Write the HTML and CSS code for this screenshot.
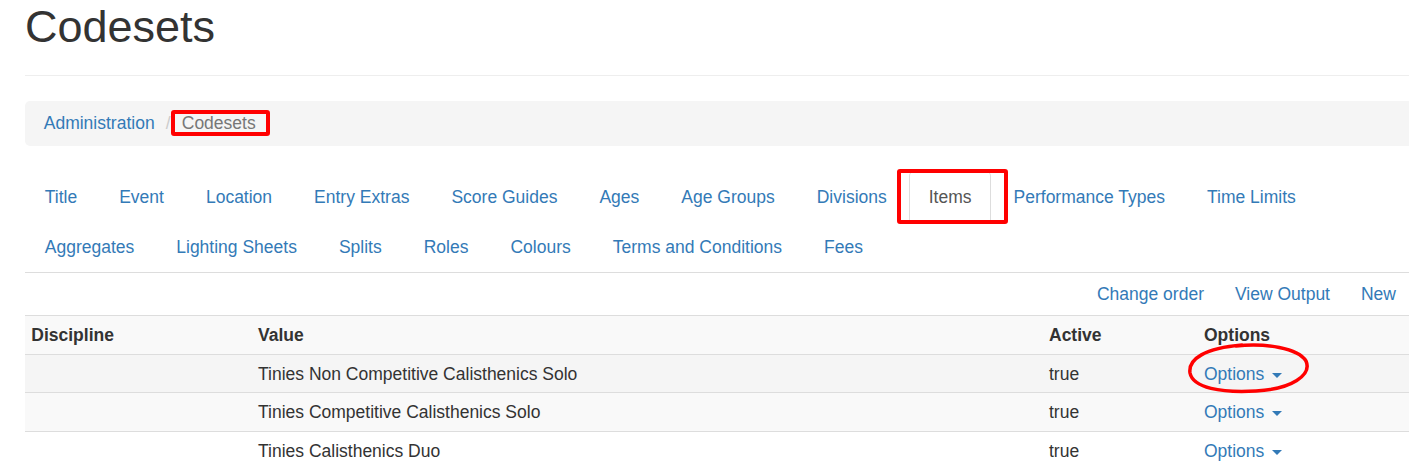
FILE: index.html
```html
<!DOCTYPE html>
<html>
<head>
<meta charset="UTF-8">
<title>Codesets</title>
<link rel="stylesheet" href="styles.css">
</head>
<body>
<div class="page">
  <div class="page-header">
    <h1>Codesets</h1>
  </div>

  <ol class="breadcrumb">
    <li><a href="#">Administration</a></li>
    <li class="active"><span class="marked">Codesets</span></li>
  </ol>

  <ul class="nav-tabs">
    <li><a href="#">Title</a></li>
    <li><a href="#">Event</a></li>
    <li><a href="#">Location</a></li>
    <li><a href="#">Entry Extras</a></li>
    <li><a href="#">Score Guides</a></li>
    <li><a href="#">Ages</a></li>
    <li><a href="#">Age Groups</a></li>
    <li><a href="#">Divisions</a></li>
    <li class="active"><a href="#">Items</a></li>
    <li><a href="#">Performance Types</a></li>
    <li><a href="#">Time Limits</a></li>
    <li><a href="#">Aggregates</a></li>
    <li><a href="#">Lighting Sheets</a></li>
    <li><a href="#">Splits</a></li>
    <li><a href="#">Roles</a></li>
    <li><a href="#">Colours</a></li>
    <li><a href="#">Terms and Conditions</a></li>
    <li><a href="#">Fees</a></li>
  </ul>

  <div class="actions">
    <a href="#">Change order</a>
    <a href="#">View Output</a>
    <a href="#">New</a>
  </div>

  <table class="codes">
    <tr class="head">
      <th class="c-disc">Discipline</th>
      <th class="c-val">Value</th>
      <th class="c-act">Active</th>
      <th class="c-opt">Options</th>
    </tr>
    <tr class="hover">
      <td></td>
      <td>Tinies Non Competitive Calisthenics Solo</td>
      <td>true</td>
      <td class="circled">
        <a href="#">Options <span class="caret"></span></a>
        <svg class="ring" width="126" height="54" viewBox="0 0 126 54">
          <path d="M50 4 C80 1 112 6 120 19 C126 33 106 47 70 49 C35 51 7 46 4 31 C2 17 19 6 56 3" fill="none" stroke="#f00" stroke-width="3.5" stroke-linecap="round"/>
        </svg>
      </td>
    </tr>
    <tr class="odd">
      <td></td>
      <td>Tinies Competitive Calisthenics Solo</td>
      <td>true</td>
      <td><a href="#">Options <span class="caret"></span></a></td>
    </tr>
    <tr>
      <td></td>
      <td>Tinies Calisthenics Duo</td>
      <td>true</td>
      <td><a href="#">Options <span class="caret"></span></a></td>
    </tr>
  </table>
</div>
</body>
</html>
```

FILE: styles.css
```css
html, body {
  margin: 0;
  overflow: hidden;
  background: #fff;
}
body {
  font-family: "Liberation Sans", Arial, sans-serif;
  font-size: 17.5px;
  line-height: 25px;
  color: #333;
}
a {
  color: #337ab7;
  text-decoration: none;
}

.page {
  width: 1395px;
  margin-left: 25px;
}

/* header */
.page-header {
  padding-bottom: 11.25px;
  margin: 0 0 25px;
  border-bottom: 1px solid #eee;
}
.page-header h1 {
  margin: 1.5px 0 12.5px;
  font-size: 45px;
  font-weight: 500;
  line-height: 1.1;
}

/* breadcrumb */
.breadcrumb {
  list-style: none;
  margin: 0 0 25px;
  padding: 10px 18.75px;
  background: #f5f5f5;
  border-radius: 5px;
}
.breadcrumb li {
  display: inline-block;
}
.breadcrumb li + li:before {
  content: "/\00a0";
  padding: 0 6.25px;
  color: #ccc;
}
.breadcrumb .active {
  color: #777;
}
.marked {
  position: relative;
}
.marked:after {
  content: "";
  position: absolute;
  left: -11px;
  right: -14px;
  top: -3px;
  bottom: -3px;
  border: 4px solid #f00;
  border-radius: 3px;
}

/* tabs */
.nav-tabs {
  list-style: none;
  margin: 0;
  padding: 0;
  display: flex;
  flex-wrap: wrap;
  border-bottom: 1px solid #ddd;
}
.nav-tabs li {
  margin-bottom: -1px;
  position: relative;
}
.nav-tabs a {
  display: block;
  padding: 13px 18.75px 11.5px;
  margin-right: 2.5px;
  border: 1px solid transparent;
  border-radius: 5px 5px 0 0;
}
.nav-tabs .active a {
  color: #555;
  background: #fff;
  border-color: #ddd #ddd transparent;
}
.nav-tabs .active:after {
  content: "";
  position: absolute;
  left: -12px;
  right: -14px;
  top: -2px;
  bottom: -2px;
  border: 4px solid #f00;
  border-radius: 3px;
}

/* actions */
.actions {
  display: flex;
  justify-content: flex-end;
  gap: 31px;
  padding: 9px 24px 8.5px 0;
}

/* table */
.codes {
  width: 100%;
  table-layout: fixed;
  border-collapse: collapse;
}
.codes th,
.codes td {
  box-sizing: border-box;
  padding: 7px 6.25px 5.5px;
  text-align: left;
  vertical-align: top;
  border-top: 1px solid #ddd;
}
.codes th {
  font-weight: bold;
}
.c-disc { width: 226.75px; }
.c-val { width: 791px; }
.c-act { width: 155px; }
.head,
.odd {
  background: #f9f9f9;
}
.hover {
  background: #f5f5f5;
}
.caret {
  display: inline-block;
  width: 0;
  height: 0;
  margin-left: 2.5px;
  vertical-align: middle;
  border-top: 5px solid;
  border-left: 5px solid transparent;
  border-right: 5px solid transparent;
}
.circled {
  position: relative;
}
.ring {
  position: absolute;
  left: -12px;
  top: -13px;
}
```
